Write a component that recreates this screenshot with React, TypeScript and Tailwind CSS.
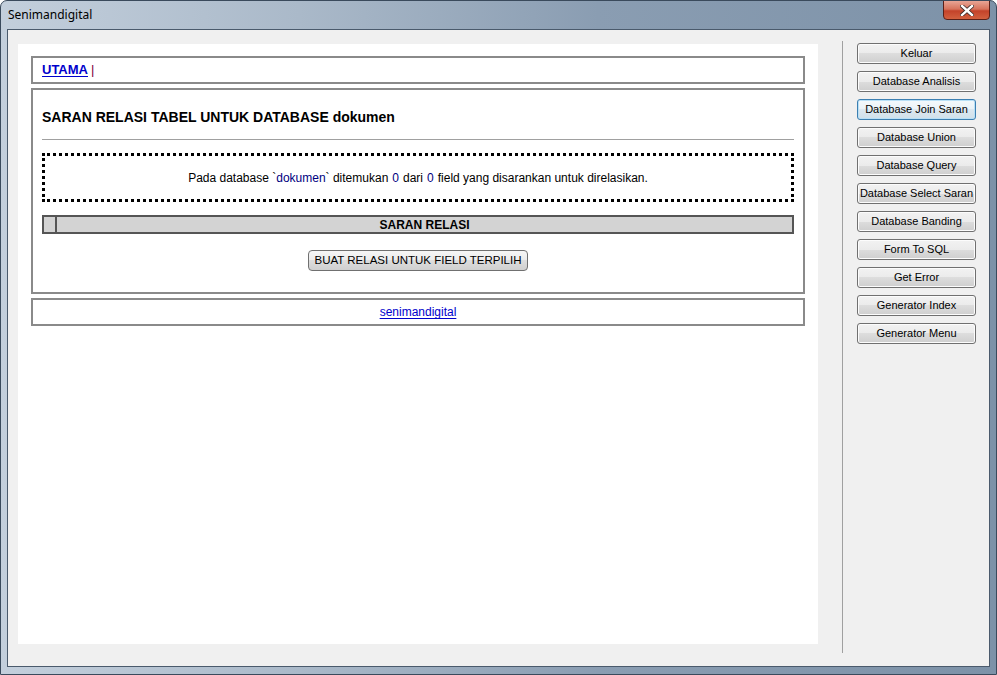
import React from 'react'

const MENU = [
  'Keluar',
  'Database Analisis',
  'Database Join Saran',
  'Database Union',
  'Database Query',
  'Database Select Saran',
  'Database Banding',
  'Form To SQL',
  'Get Error',
  'Generator Index',
  'Generator Menu',
]

function SideButton({ label, focused }: { label: string; focused?: boolean }) {
  return (
    <button
      className={`w-[119px] h-[21px] rounded-[3px] border text-[11px] leading-none text-black ${
        focused
          ? 'border-[#3c7fb1] bg-[linear-gradient(#f4f9fc_0%,#eaf2f7_50%,#dce8f0_50%,#d0e0ea_100%)] shadow-[inset_0_0_0_1px_#b9e0f6]'
          : 'border-[#707070] bg-[linear-gradient(#f2f2f2_0%,#ebebeb_50%,#dddddd_50%,#cfcfcf_100%)] shadow-[inset_0_0_0_1px_#fcfcfc]'
      }`}
      style={{ fontFamily: '"Liberation Sans", Arial, sans-serif' }}
    >
      {label}
    </button>
  )
}

export default function App() {
  return (
    <div className="w-[997px] h-[675px] flex flex-col rounded-t-[7px] border border-[#3a4a5c] bg-[linear-gradient(90deg,#c3cfdc_0%,#aab9c9_30%,#8a9db2_60%,#7d92a8_100%)] overflow-hidden">
      {/* Title bar */}
      <div className="relative h-[28px] shrink-0 flex items-center pl-[7px]">
        <span
          className="text-[12px] text-black"
          style={{ fontFamily: '"Noto Sans", "Open Sans", sans-serif' }}
        >
          Senimandigital
        </span>
        <div className="absolute top-[-1px] right-[6px] w-[47px] h-[20px] rounded-b-[4px] border border-[#5a2018] bg-[linear-gradient(#e8a595_0%,#d6735c_45%,#c4432a_55%,#d2603f_100%)] flex items-center justify-center">
          <svg width="14" height="11" viewBox="0 0 14 11">
            <path d="M2 1 L12 10 M12 1 L2 10" stroke="#3a2a28" strokeWidth="4" strokeLinecap="square" />
            <path d="M2 1 L12 10 M12 1 L2 10" stroke="#ffffff" strokeWidth="2.4" strokeLinecap="square" />
          </svg>
        </div>
      </div>

      {/* Client area */}
      <div className="mx-[6px] h-[638px] border border-[#4a5a6c] bg-[#f0f0f0] flex">
        {/* Web view */}
        <div
          className="ml-[10px] mt-[14px] w-[800px] h-[600px] bg-white px-[13px] pt-[12px] text-[12px] text-black"
          style={{ fontFamily: '"Liberation Sans", Tahoma, sans-serif' }}
        >
          <div className="h-[28px] border-2 border-[#8a8a8a] flex items-center px-[9px]">
            <a className="font-bold text-[#0000cc] underline underline-offset-2 text-[13px]">UTAMA</a>
            <span className="ml-[3px] text-[#800040] text-[13px]">|</span>
          </div>

          <div className="mt-[4px] h-[206px] border-2 border-[#8a8a8a] px-[9px]">
            <h1 className="mt-[17px] text-[14px] font-bold leading-[20px]">
              SARAN RELASI TABEL UNTUK DATABASE dokumen
            </h1>
            <div className="mt-[12px] h-px bg-[#a0a0a0]" />
            <div className="mt-[13px] h-[49px] border-[3px] border-dotted border-black flex items-center justify-center">
              Pada database `<span className="text-[#000080]">dokumen</span>` ditemukan{' '}
              <span className="text-[#000080] mx-[4px]">0</span> dari{' '}
              <span className="text-[#000080] mx-[4px]">0</span> field yang disarankan untuk direlasikan.
            </div>
            <div className="mt-[13px] h-[19px] flex border-2 border-[#555555] bg-[#d3d3d3]">
              <div className="w-[13px] border-r-2 border-[#555555]" />
              <div className="flex-1 flex items-center justify-center font-bold text-[12px]">
                SARAN RELASI
              </div>
            </div>
            <div className="mt-[16px] flex justify-center">
              <button className="h-[21px] px-[5px] rounded-[4px] border border-[#707070] bg-[linear-gradient(#f6f6f6_0%,#ebebeb_50%,#dddddd_50%,#cfcfcf_100%)] text-[11.5px] leading-none">
                BUAT RELASI UNTUK FIELD TERPILIH
              </button>
            </div>
          </div>

          <div className="mt-[4px] h-[28px] border-2 border-[#8a8a8a] flex items-center justify-center">
            <a className="text-[#0000cc] underline underline-offset-2">senimandigital</a>
          </div>
        </div>

        {/* Separator */}
        <div className="ml-[24px] mt-[11px] h-[612px] w-px bg-[#a0a0a0]" />

        {/* Menu */}
        <div className="ml-[14px] mt-[13px] flex flex-col gap-[7px]">
          {MENU.map((m, i) => (
            <SideButton key={m} label={m} focused={i === 2} />
          ))}
        </div>
      </div>
    </div>
  )
}
